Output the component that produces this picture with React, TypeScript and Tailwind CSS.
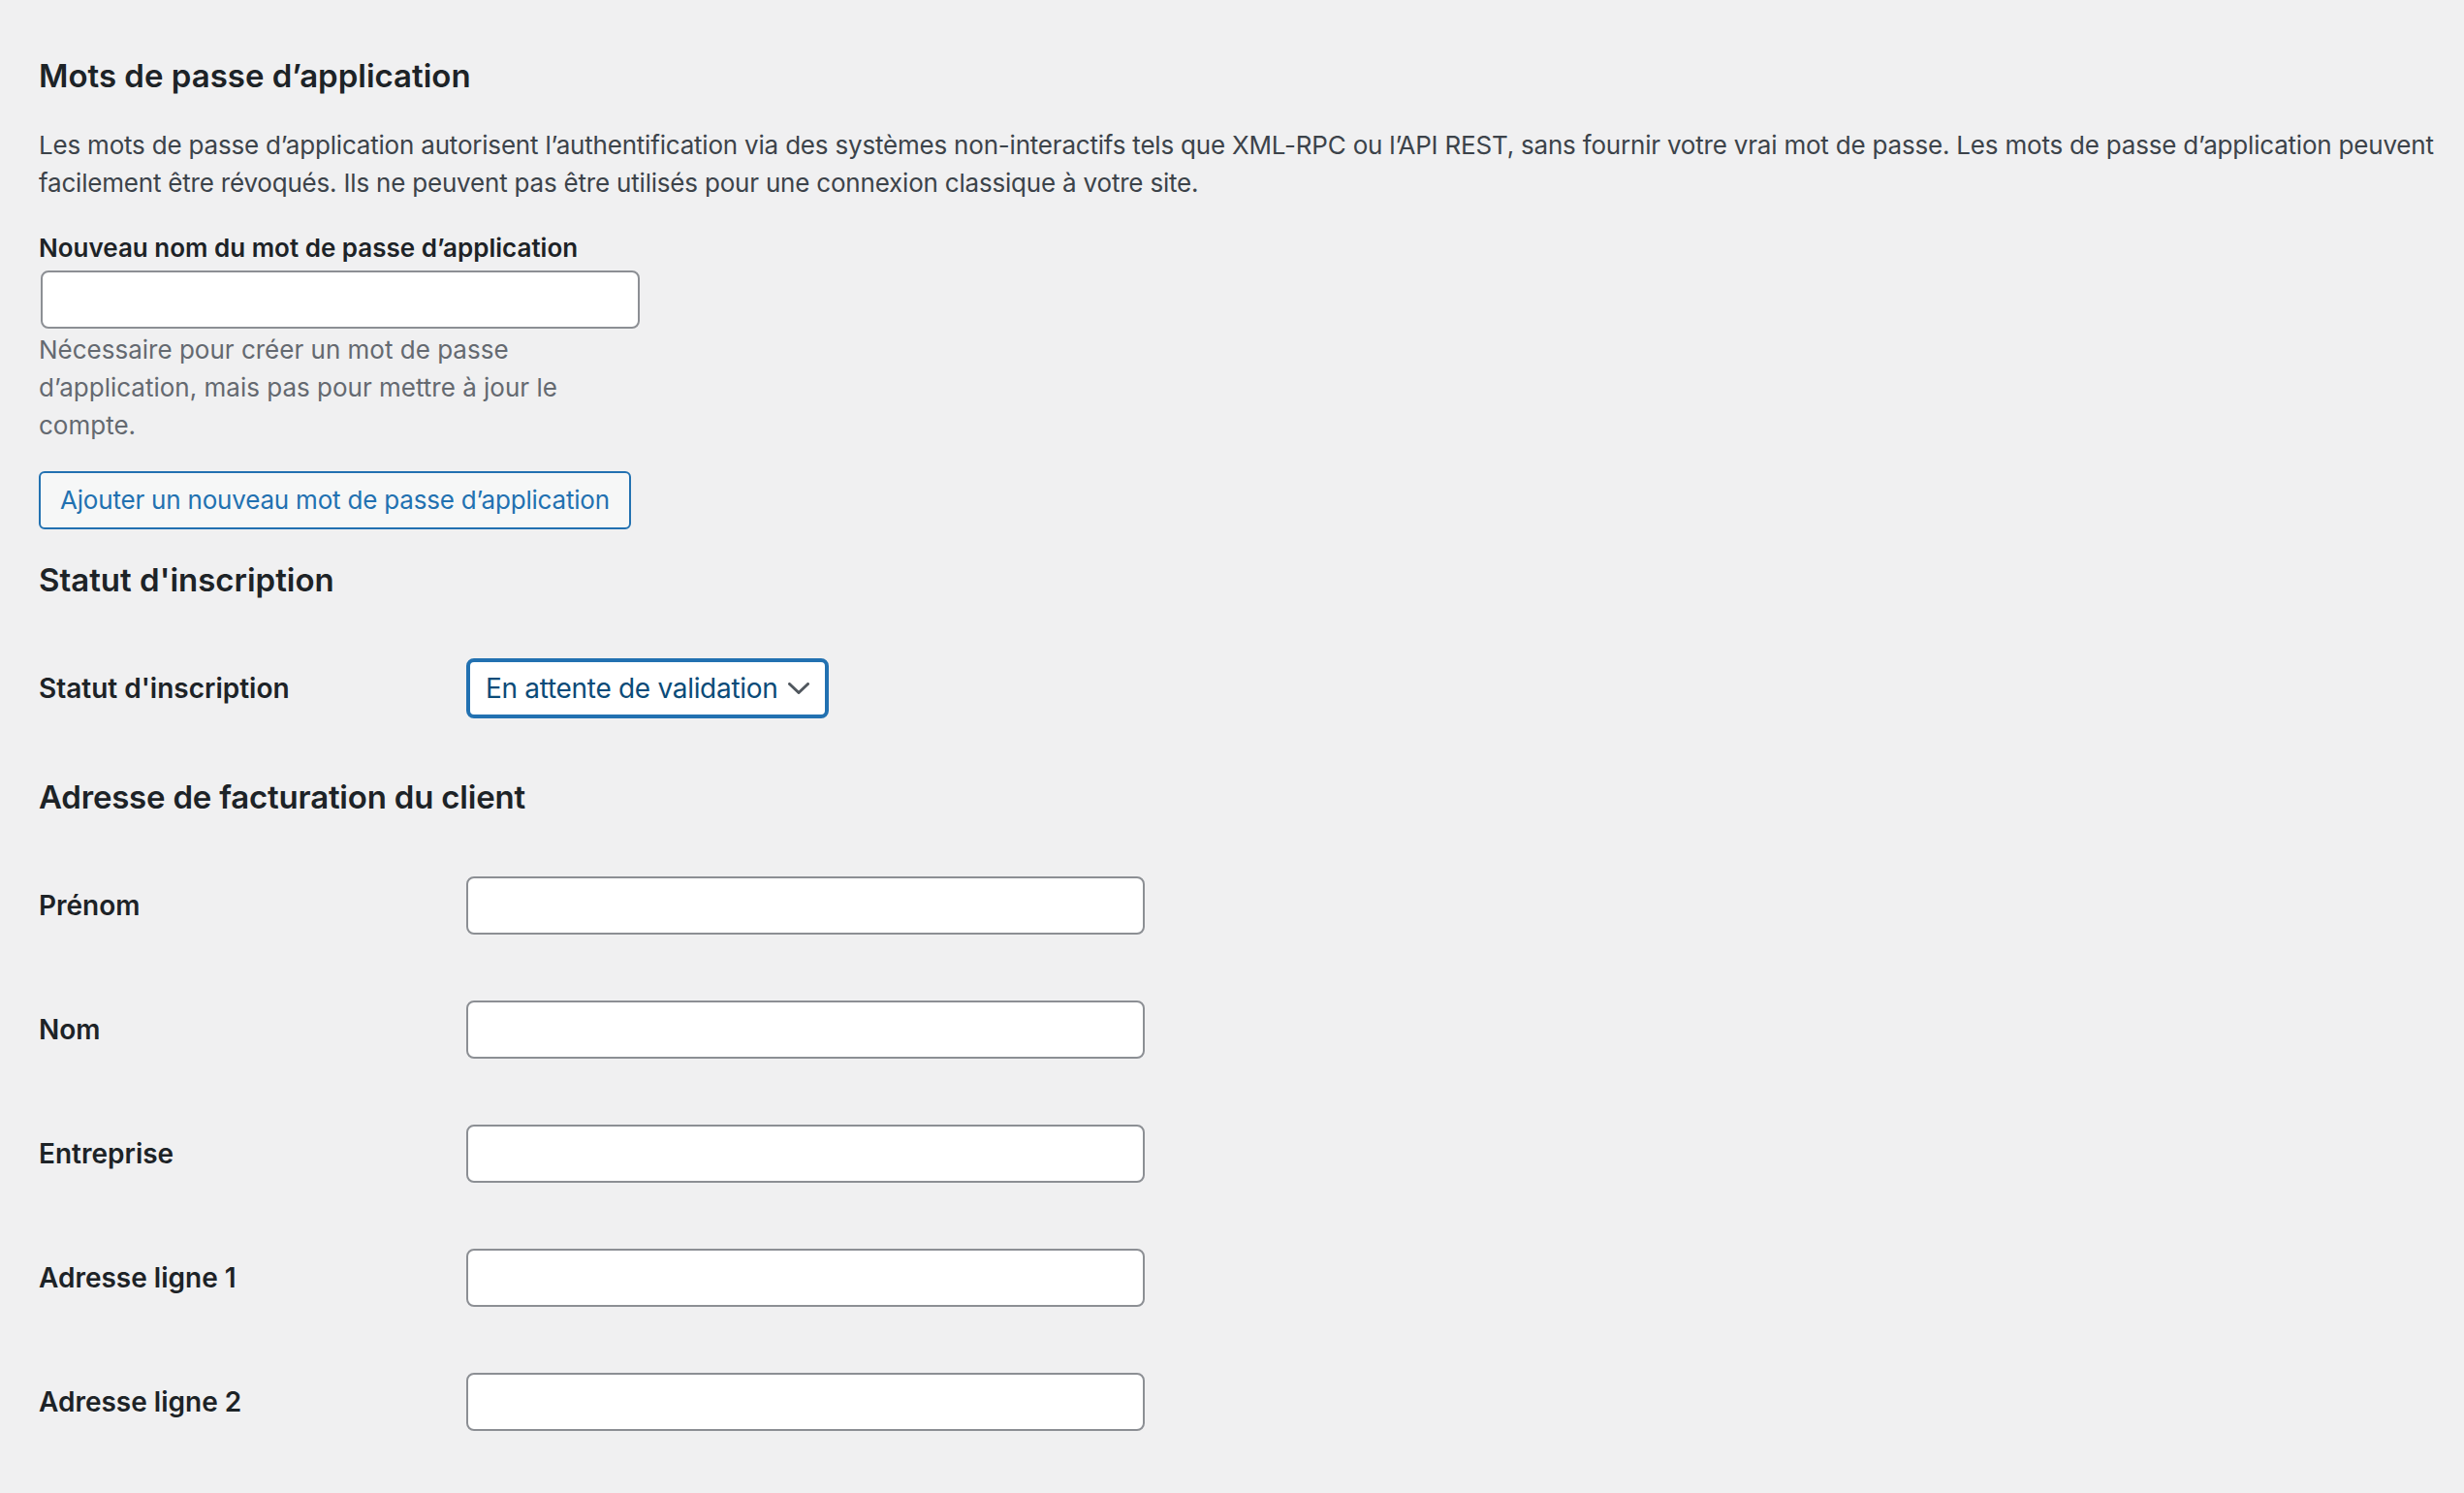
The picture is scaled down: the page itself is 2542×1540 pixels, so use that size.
import React from "react";

const font = { fontFamily: "Inter, 'Noto Sans', sans-serif" };

function Row({ label }: { label: string }) {
  return (
    <div className="grid grid-cols-[441px_1fr] items-center mt-[68px] first:mt-0">
      <label className="text-[28px] font-semibold text-[#1d2327] leading-[40px]">{label}</label>
      <input
        type="text"
        className="w-[700px] h-[60px] bg-white border-2 border-[#8c8f94] rounded-[8px] px-4 outline-none"
      />
    </div>
  );
}

export default function App() {
  return (
    <div className="min-h-[1540px] w-full bg-[#f0f0f1] pl-[40px] pr-[20px]" style={font}>
      <h2 className="pt-[55px] text-[33px] leading-[46px] font-semibold text-[#1d2327]">
        Mots de passe d’application
      </h2>
      <p className="mt-[29px] text-[26px] leading-[39px] tracking-[-0.2px] text-[#3c434a]">
        Les mots de passe d’application autorisent l’authentification via des systèmes non-interactifs tels que XML-RPC ou l’API REST, sans fournir votre vrai mot de passe. Les mots de passe d’application peuvent facilement être révoqués. Ils ne peuvent pas être utilisés pour une connexion classique à votre site.
      </p>
      <div className="mt-[28px] flex flex-col">
        <label className="text-[26px] font-semibold text-[#1d2327] leading-[40px]">
          Nouveau nom du mot de passe d’application
        </label>
        <input
          type="text"
          className="mt-[3px] ml-[2px] w-[618px] h-[60px] bg-white border-2 border-[#8c8f94] rounded-[8px] px-4 outline-none"
        />
        <p className="mt-[2px] w-[618px] text-[26px] leading-[39px] text-[#646970]">
          Nécessaire pour créer un mot de passe d’application, mais pas pour mettre à jour le compte.
        </p>
        <div className="mt-[28px]">
          <button className="h-[60px] px-[20px] border-2 border-[#2271b1] rounded-[6px] bg-[#f6f7f7] text-[26px] tracking-[-0.2px] text-[#2271b1] leading-none">
            Ajouter un nouveau mot de passe d’application
          </button>
        </div>
      </div>

      <h2 className="mt-[29px] text-[33px] leading-[46px] font-semibold text-[#1d2327]">
        Statut d'inscription
      </h2>
      <div className="mt-[58px] grid grid-cols-[441px_1fr] items-center">
        <label className="text-[28px] font-semibold text-[#1d2327] leading-[40px]">Statut d'inscription</label>
        <div className="w-[374px] h-[62px] border-4 border-[#2271b1] rounded-[8px] bg-white flex items-center justify-between pl-[16px] pr-[16px]">
          <span className="text-[28px] tracking-[-0.3px] text-[#0a4b78]">En attente de validation</span>
          <svg width="22" height="12" viewBox="0 0 22 12" fill="none">
            <path d="M1.5 1.5 L11 10.5 L20.5 1.5" stroke="#50575e" strokeWidth="3" strokeLinecap="round" strokeLinejoin="round" />
          </svg>
        </div>
      </div>

      <h2 className="mt-[58px] text-[33px] leading-[46px] font-semibold tracking-[-0.2px] text-[#1d2327]">
        Adresse de facturation du client
      </h2>
      <div className="mt-[59px] flex flex-col">
        <Row label="Prénom" />
        <Row label="Nom" />
        <Row label="Entreprise" />
        <Row label="Adresse ligne 1" />
        <Row label="Adresse ligne 2" />
      </div>
    </div>
  );
}
